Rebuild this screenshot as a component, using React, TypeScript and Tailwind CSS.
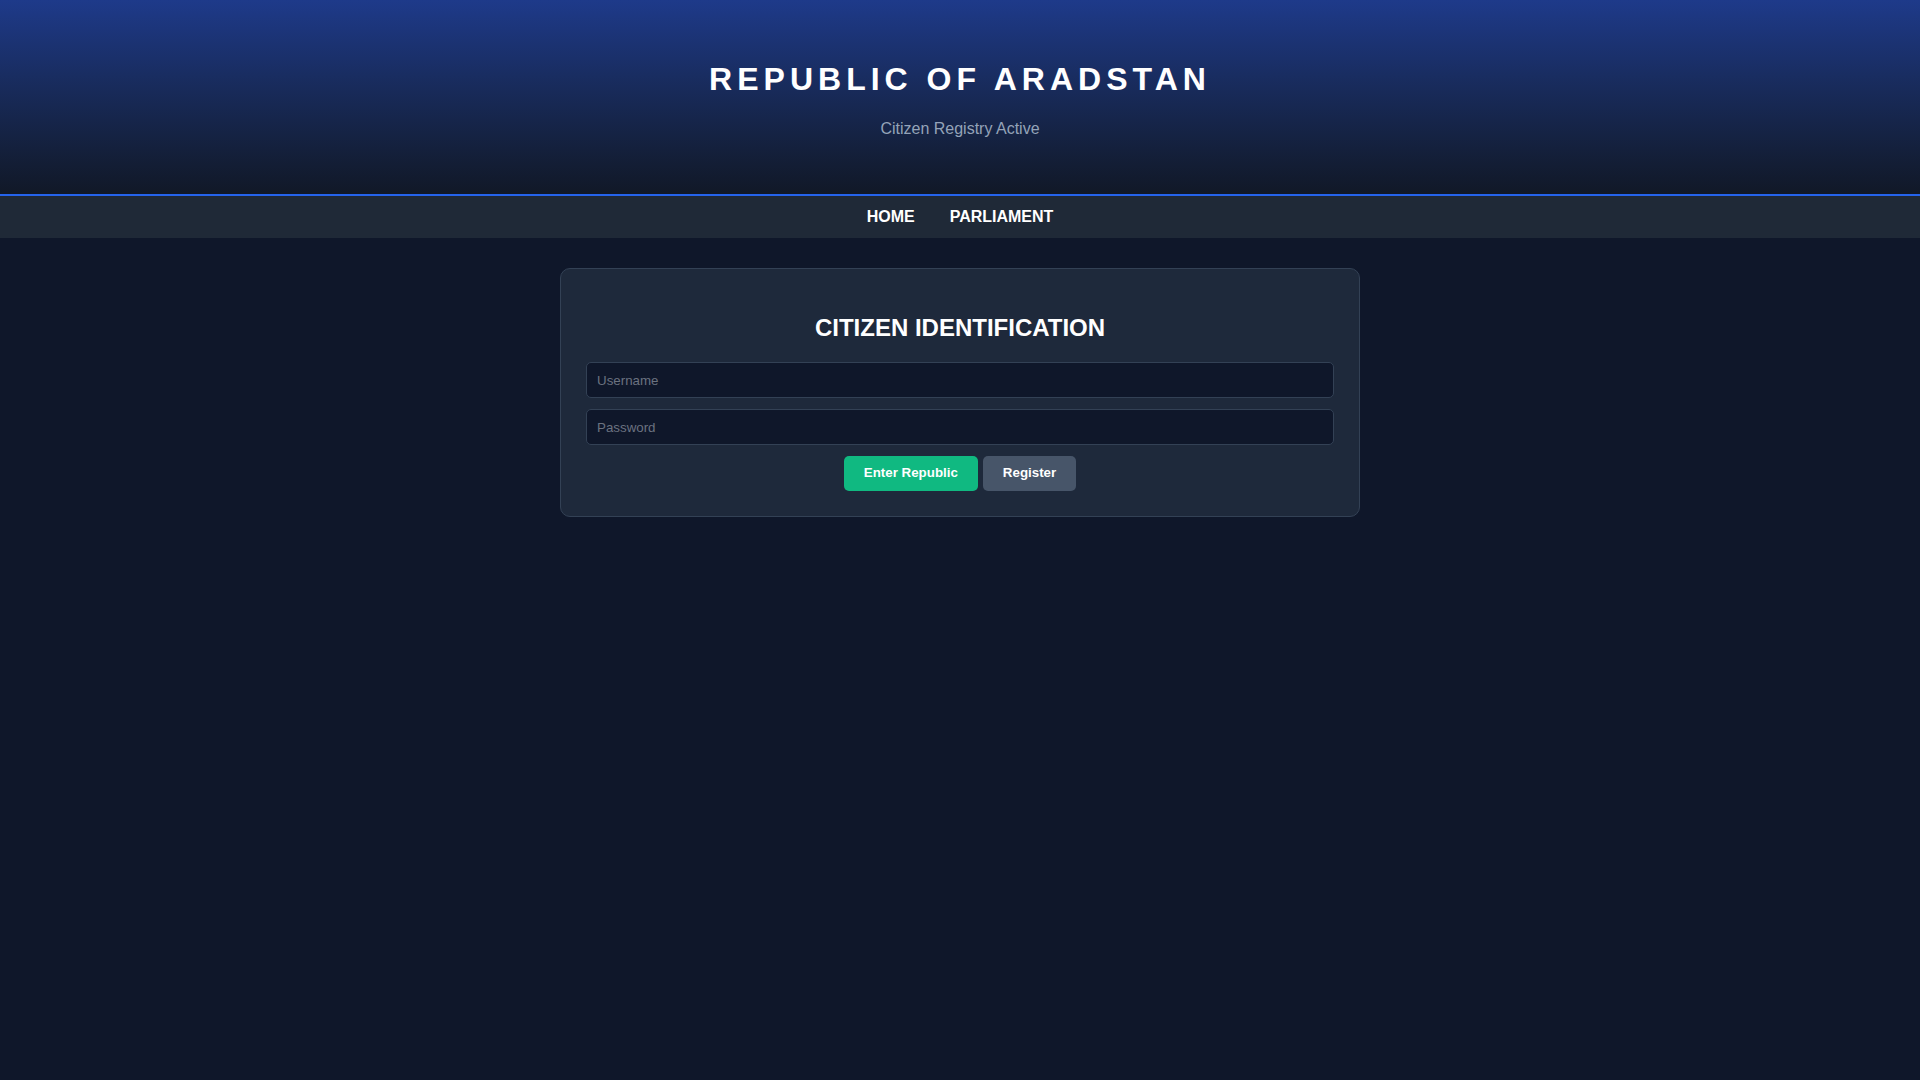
import React from "react";

export default function App() {
  return (
    <div className="min-h-screen w-full bg-[#0f172a] text-white" style={{ fontFamily: '"Liberation Sans", Arial, sans-serif' }}>
      <header className="bg-gradient-to-b from-[#1e3a8a] to-[#111827] border-b-2 border-[#2563eb] pt-[40px] pb-[40px] text-center">
        <h1 className="mt-[21.44px] mb-[21.44px] text-[32px] leading-[normal] font-bold tracking-[5px] text-white">
          REPUBLIC OF ARADSTAN
        </h1>
        <p className="mb-[16px] text-[16px] leading-[normal] text-[#94a3b8]">Citizen Registry Active</p>
      </header>
      <nav className="bg-[#1f2937] h-[42px] flex items-center justify-center gap-[35px]">
        <a className="text-[16px] font-bold text-white leading-[normal] cursor-pointer">HOME</a>
        <a className="text-[16px] font-bold text-white leading-[normal] cursor-pointer">PARLIAMENT</a>
      </nav>
      <main className="flex justify-center pt-[30px]">
        <div className="w-[800px] bg-[#1e293b] border border-[#334155] rounded-[10px] p-[25px] text-center">
          <h2 className="mt-[19.92px] mb-[19.92px] text-[24px] leading-[normal] font-bold text-white">CITIZEN IDENTIFICATION</h2>
          <div className="flex flex-col gap-[11px]">
            <input
              type="text"
              placeholder="Username"
              className="w-full h-[36px] px-[10px] pt-[1px] bg-[#0f172a] border border-[#334155] rounded-[5px] text-[13.33px] text-white placeholder:text-[#6b7280] outline-none"
              style={{ fontFamily: '"Liberation Sans", Arial, sans-serif' }}
            />
            <input
              type="password"
              placeholder="Password"
              className="w-full h-[36px] px-[10px] pt-[1px] bg-[#0f172a] border border-[#334155] rounded-[5px] text-[13.33px] text-white placeholder:text-[#6b7280] outline-none"
              style={{ fontFamily: '"Liberation Sans", Arial, sans-serif' }}
            />
            <div className="flex justify-center gap-[5px]">
              <button className="h-[35px] px-[20px] bg-[#10b981] text-white text-[13.33px] font-bold rounded-[5px]">Enter Republic</button>
              <button className="h-[35px] px-[20px] bg-[#475569] text-white text-[13.33px] font-bold rounded-[5px]">Register</button>
            </div>
          </div>
        </div>
      </main>
    </div>
  );
}
